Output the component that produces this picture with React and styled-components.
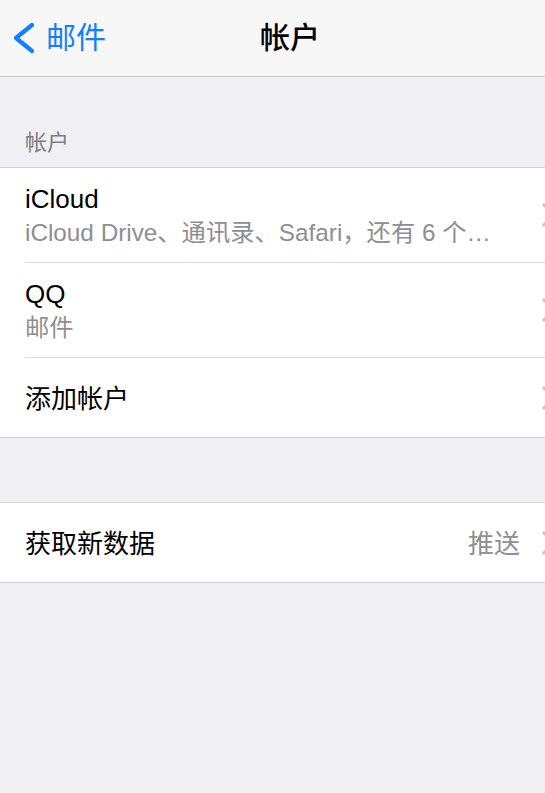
import React from 'react'
import styled, { createGlobalStyle } from 'styled-components'

const GlobalStyle = createGlobalStyle`
    html, body {
        margin:0;
        padding:0;
        background-color:#efeff4;
        font-family:"Liberation Sans", "Noto Sans CJK SC", sans-serif;
        -webkit-font-smoothing:antialiased;
    }
`

const Screen = styled.div`
    min-height:100vh;
    width:545px;
    overflow:hidden;
    background-color:#efeff4;
`

const NavBar = styled.div`
    height:76px;
    display:flex;
    align-items:center;
    background-color:#f7f7f8;
    border-bottom:1px solid #c8c7cc;
`

const BackButton = styled.div`
    width:260px;
    box-sizing:border-box;
    padding-left:11px;
    display:flex;
    align-items:center;
    gap:11px;
    color:#157efb;
    font-size:30px;
    line-height:36px;
    cursor:pointer;
`

const NavTitle = styled.div`
    font-size:30px;
    line-height:36px;
    font-weight:500;
    color:#000;
`

const SectionHeader = styled.div`
    height:90px;
    box-sizing:border-box;
    display:flex;
    align-items:flex-end;
    padding:0 25px 13px;
    font-size:22px;
    line-height:22px;
    color:#7d7d82;
`

const Group = styled.div`
    background-color:#fff;
    border-top:1px solid #d1d1d6;
    border-bottom:1px solid #d1d1d6;
    margin-top:${p => p.$gap || 0}px;
`

const Row = styled.div`
    padding-left:25px;
    overflow:hidden;
`

const RowInner = styled.div`
    height:${p => p.$height}px;
    display:flex;
    align-items:center;
    border-bottom:${p => p.$last ? 'none' : '1px solid #dcdce0'};
`

const RowText = styled.div`
    flex:1;
    min-width:0;
    display:flex;
    flex-direction:column;
    padding-top:2px;
`

const Title = styled.div`
    font-size:26px;
    line-height:34px;
    color:#000;
    white-space:nowrap;
`

const Subtitle = styled.div`
    font-size:24.3px;
    line-height:34px;
    color:#8e8e93;
    white-space:nowrap;
`

const Detail = styled.div`
    font-size:26px;
    line-height:34px;
    color:#8e8e93;
    margin-right:21px;
    padding-top:2px;
`

const Chevron = styled.svg`
    flex-shrink:0;
    width:16px;
    height:24px;
    margin-right:-12px;
`

const DisclosureIcon = () => (
  <Chevron viewBox="0 0 16 24">
    <path d="M3 2 L13 12 L3 22" fill="none" stroke="#c7c7cc" strokeWidth="3.2" strokeLinecap="round" strokeLinejoin="round" />
  </Chevron>
)

const BackChevron = () => (
  <svg width="24" height="32" viewBox="0 0 24 32">
    <path d="M21 3 L5 16 L21 29" fill="none" stroke="#157efb" strokeWidth="4.2" strokeLinecap="round" strokeLinejoin="round" />
  </svg>
)

const accounts = [
  { title: 'iCloud', sub: 'iCloud Drive、通讯录、Safari，还有 6 个…', height: 94 },
  { title: 'QQ', sub: '邮件', height: 94 },
  { title: '添加帐户', height: 79 },
]

const App = () => {
  return (
    <Screen>
        <GlobalStyle />
        <NavBar>
            <BackButton>
                <BackChevron />
                邮件
            </BackButton>
            <NavTitle>帐户</NavTitle>
        </NavBar>

        <SectionHeader>帐户</SectionHeader>
        <Group>
            {accounts.map((a, i) => (
                <Row key={a.title}>
                    <RowInner $height={a.height} $last={i === accounts.length - 1}>
                        <RowText>
                            <Title>{a.title}</Title>
                            {a.sub && <Subtitle>{a.sub}</Subtitle>}
                        </RowText>
                        <DisclosureIcon />
                    </RowInner>
                </Row>
            ))}
        </Group>

        <Group $gap={64}>
            <Row>
                <RowInner $height={79} $last>
                    <RowText>
                        <Title>获取新数据</Title>
                    </RowText>
                    <Detail>推送</Detail>
                    <DisclosureIcon />
                </RowInner>
            </Row>
        </Group>
    </Screen>
  )
}

export default App
